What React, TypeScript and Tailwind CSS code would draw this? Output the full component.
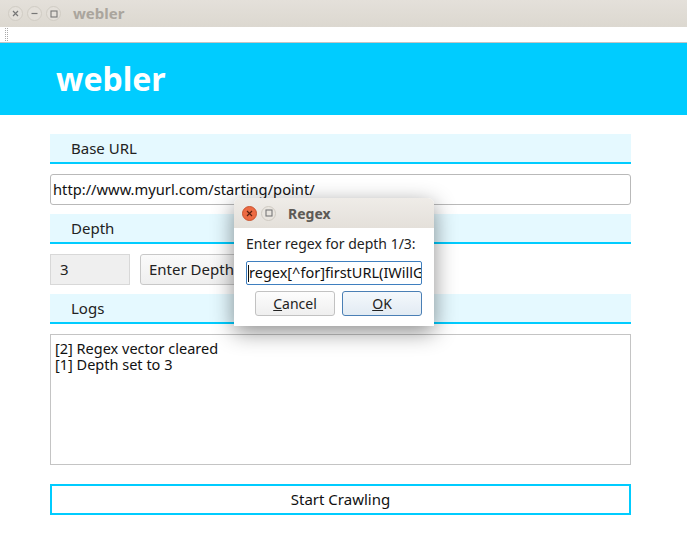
import React from "react";

const font = { fontFamily: '"Noto Sans", "Open Sans", sans-serif' };

function TitleButton({ children, red }: { children: React.ReactNode; red?: boolean }) {
  return (
    <div
      className={
        "w-[15px] h-[15px] rounded-full flex items-center justify-center border " +
        (red ? "bg-[#ec6a43] border-[#c9532e]" : "bg-[#e9e5df] border-[#cfcac2]")
      }
    >
      {children}
    </div>
  );
}

function Section({ label }: { label: string }) {
  return (
    <div className="h-[30px] bg-[#e5f9ff] border-b-[2px] border-[#00ccff] flex items-center pl-[21px] text-[15px] text-[#222]">
      {label}
    </div>
  );
}

export default function App() {
  return (
    <div className="w-[687px] h-[549px] bg-white relative overflow-hidden" style={font}>
      {/* window title bar */}
      <div className="h-[27px] bg-gradient-to-b from-[#e4e0da] to-[#dcd8d0] flex items-center pl-[8px] gap-[4px]">
        <div className="w-[15px] h-[15px] rounded-full bg-[#e4e0da] border border-[#d0ccc4] flex items-center justify-center">
          <svg width="7" height="7" viewBox="0 0 7 7"><path d="M1 1L6 6M6 1L1 6" stroke="#777" strokeWidth="1.2" /></svg>
        </div>
        <div className="w-[15px] h-[15px] rounded-full bg-[#e4e0da] border border-[#d0ccc4] flex items-center justify-center">
          <svg width="7" height="7" viewBox="0 0 7 7"><path d="M0.5 3.5H6.5" stroke="#777" strokeWidth="1.2" /></svg>
        </div>
        <div className="w-[15px] h-[15px] rounded-full bg-[#e4e0da] border border-[#d0ccc4] flex items-center justify-center">
          <svg width="8" height="8" viewBox="0 0 8 8"><rect x="1" y="1" width="6" height="6" fill="none" stroke="#777" strokeWidth="1.1" /></svg>
        </div>
        <span className="ml-[8px] text-[15px] font-bold text-[#aaa59d]">webler</span>
      </div>
      {/* toolbar area */}
      <div className="h-[15px] bg-white relative">
        <div className="absolute left-[5px] top-[1px] h-[13px] w-[3px] border-l border-r border-dotted border-[#aaa]" />
      </div>
      <div className="h-[1px] bg-[#c4c4c4]" />
      {/* header */}
      <div className="h-[72px] bg-[#00ccff] flex items-center pl-[56px]">
        <span className="text-white font-bold text-[32px] leading-none">webler</span>
      </div>

      <div className="px-[50px] pt-[19px]" style={{ width: 681 }}>
        <Section label="Base URL" />
        <div className="mt-[10px] h-[31px] border border-[#b9b9b9] rounded-[3px] flex items-center pl-[2px] text-[14.7px] text-[#111]">
          http://www.myurl.com/starting/point/
        </div>
        <div className="mt-[9px]">
          <Section label="Depth" />
        </div>
        <div className="mt-[10px] flex gap-[10px] h-[31px]">
          <div className="w-[80px] bg-[#efefef] border border-[#d8d8d8] flex items-center pl-[9px] text-[15px] text-[#222]">3</div>
          <div className="w-[120px] border border-[#c8c8c8] rounded-[3px] bg-gradient-to-b from-[#fafafa] to-[#efefef] flex items-center pl-[8px] text-[15px] text-[#222] whitespace-nowrap">
            Enter Depth
          </div>
        </div>
        <div className="mt-[9px]">
          <Section label="Logs" />
        </div>
        <div className="mt-[10px] h-[131px] border border-[#c4c4c4] px-[4px] pt-[5px] text-[14.5px] leading-[16px] text-[#111]">
          <div>[2] Regex vector cleared</div>
          <div>[1] Depth set to 3</div>
        </div>
        <div className="mt-[19px] h-[31px] border-[2px] border-[#00ccff] flex items-center justify-center text-[15px] text-[#111]">
          Start Crawling
        </div>
      </div>

      {/* dialog */}
      <div className="absolute left-[234px] top-[198px] w-[200px] h-[128px] bg-white rounded-t-[6px] shadow-[0_6px_22px_rgba(0,0,0,0.45)] overflow-hidden">
        <div className="h-[30px] bg-gradient-to-b from-[#efece8] to-[#e4e0da] flex items-center pl-[8px] gap-[4px]">
          <TitleButton red>
            <svg width="7" height="7" viewBox="0 0 7 7"><path d="M1 1L6 6M6 1L1 6" stroke="#5a2010" strokeWidth="1.2" /></svg>
          </TitleButton>
          <TitleButton>
            <svg width="8" height="8" viewBox="0 0 8 8"><rect x="1" y="1" width="6" height="6" fill="none" stroke="#777" strokeWidth="1.1" /></svg>
          </TitleButton>
          <span className="ml-[8px] text-[14px] font-bold text-[#5d5a55]">Regex</span>
        </div>
        <div className="px-[12px] pt-[6px]">
          <div className="text-[14px] text-[#222] leading-[20px] whitespace-nowrap">Enter regex for depth 1/3:</div>
          <div className="mt-[7px] h-[24px] border border-[#3f7fbf] rounded-[2px] flex items-center text-[14.5px] text-[#111] overflow-hidden whitespace-nowrap pl-[1px]">
            <span className="border-l border-[#111] h-[17px] flex items-center">regex[^for]firstURL(IWillGo)</span>
          </div>
          <div className="mt-[6px] flex justify-end gap-[7px]">
            <div className="w-[80px] h-[25px] border border-[#c2c2c2] rounded-[3px] bg-gradient-to-b from-[#fdfdfd] to-[#efefef] flex items-center justify-center text-[14px] text-[#222]">
              <span><span className="underline">C</span>ancel</span>
            </div>
            <div className="w-[80px] h-[25px] border border-[#4a7fb5] rounded-[3px] bg-gradient-to-b from-[#f4f8fc] to-[#e2ebf3] flex items-center justify-center text-[14px] text-[#222]">
              <span><span className="underline">O</span>K</span>
            </div>
          </div>
        </div>
      </div>
    </div>
  );
}
